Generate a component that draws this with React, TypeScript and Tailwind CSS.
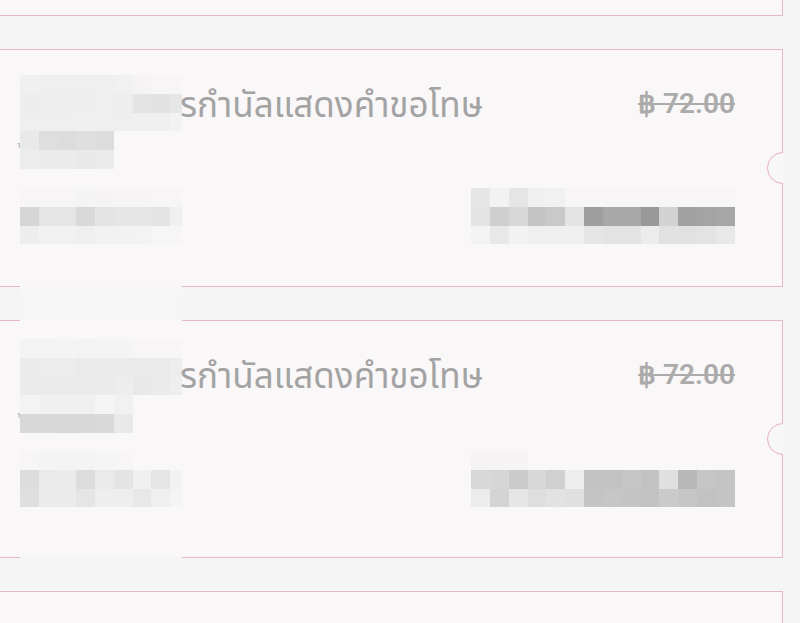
type Row = { cells: string[] };
type Mosaic = { top: number; rows: Row[] };

type Ticket = {
  bare?: boolean;
  leftTop?: Mosaic;
  leftBottom?: Mosaic;
  right?: Mosaic;
  qtyTop?: number;
  strip?: "tall" | "short";
};

const F = "#f7f5f6";

const tickets: Ticket[] = [
  { bare: true },
  {
    leftTop: {
      top: 25,
      rows: [
        { cells: ["#f0f0f0", "#efefef", "#efefef", "#efefef", "#efefef", "#f1f1f1", "#f5f3f4", F, F] },
        { cells: ["#ededed", "#eeeeee", "#eeeeee", "#eeeeee", "#efefef", "#eeeeee", "#e4e4e4", "#e2e2e2", "#e6e6e6"] },
        { cells: ["#efefef", "#efefef", "#efefef", "#f0f0f0", "#efefef", "#efefef", "#f0f0f0", "#efefef", "#f2f2f2"] },
        { cells: ["#e9e9e9", "#dedede", "#dcdcdc", "#dfdfdf", "#dddddd"] },
        { cells: ["#ececec", "#ebebeb", "#ebebeb", "#e9e9e9", "#ebebeb"] },
      ],
    },
    qtyTop: 93,
    leftBottom: {
      top: 138,
      rows: [
        { cells: [F, F, F, "#f5f4f4", "#f5f3f4", "#f6f4f5", "#f6f4f5", F, F] },
        { cells: ["#d6d6d6", "#e5e5e5", "#e5e5e5", "#d9d9d9", "#e4e4e4", "#e6e6e6", "#e6e6e6", "#e4e4e4", "#f0f0f0"] },
        { cells: ["#ededed", "#f1f1f1", "#f1f1f1", "#efefef", "#f2f2f2", "#f2f2f2", "#f3f3f3", "#f6f6f6", F] },
      ],
    },
    right: {
      top: 138,
      rows: [
        { cells: ["#e6e6e6", "#f3f2f2", "#e5e5e5", "#f1f0f0", "#f2f1f1", "#f7f5f5", F, F, F, F, F, F, F, F] },
        { cells: ["#e3e3e3", "#cfcfcf", "#d8d8d8", "#c4c4c4", "#c9c9c9", "#e3e3e3", "#9e9e9e", "#a8a8a8", "#a8a8a8", "#999999", "#d3d3d3", "#a2a2a2", "#a4a4a4", "#a6a6a6"] },
        { cells: ["#f3f3f3", "#e8e8e8", "#f2f2f2", "#efefef", "#efefef", "#f0f0f0", "#e6e6e6", "#e3e3e3", "#e3e3e3", "#ececec", "#e1e1e1", "#e1e1e1", "#e3e3e3", "#e8e8e8"] },
      ],
    },
    strip: "tall",
  },
  {
    leftTop: {
      top: 18,
      rows: [
        { cells: ["#f3f3f3", "#f3f3f3", "#f4f4f4", "#f3f3f3", "#f4f4f4", "#f4f4f4", F, F, F] },
        { cells: ["#ebebeb", "#ececec", "#ececec", "#eaeaea", "#ebebeb", "#ebebeb", "#eaeaea", "#eaeaea", "#ededed"] },
        { cells: ["#ebebeb", "#ebebeb", "#ebebeb", "#ebebeb", "#ebebeb", "#ededed", "#e9e9e9", "#ebebeb", "#eeeeee"] },
        { cells: ["#f3f3f3", "#f0f0f0", "#f0f0f0", "#f0f0f0", "#f5f5f5", "#f1f1f1"] },
        { cells: ["#d8d8d8", "#d8d8d8", "#d7d7d7", "#d8d8d8", "#d9d9d9", "#e9e9e9"] },
      ],
    },
    qtyTop: 92,
    leftBottom: {
      top: 130,
      rows: [
        { cells: [F, "#f5f4f4", "#f5f4f4", "#f5f4f4", "#f6f5f5", F] },
        { cells: ["#dcdcdc", "#eaeaea", "#ebebeb", "#dddddd", "#eaeaea", "#e4e4e4", "#f0f0f0", "#e5e5e5", "#f2f2f2"] },
        { cells: ["#dfdfdf", "#ebebeb", "#ebebeb", "#e5e5e5", "#eeeeee", "#eeeeee", "#e8e8e8", "#efefef", "#f4f4f4"] },
      ],
    },
    right: {
      top: 130,
      rows: [
        { cells: ["#f5f3f3", "#f5f3f3", "#f5f3f3"] },
        { cells: ["#d8d8d8", "#d6d6d6", "#cbcbcb", "#d8d8d8", "#d0d0d0", "#eeeeee", "#c2c2c2", "#c2c2c2", "#c6c6c6", "#c2c2c2", "#e0e0e0", "#b8b8b8", "#c6c6c6", "#c4c4c4"] },
        { cells: ["#ececec", "#d4d4d4", "#e6e6e6", "#dedede", "#e2e2e2", "#e0e0e0", "#c4c4c4", "#c6c6c6", "#c4c4c4", "#c2c2c2", "#cacaca", "#c6c6c6", "#c2c2c2", "#c4c4c4"] },
      ],
    },
    strip: "short",
  },
  { bare: true },
];

function MosaicBlock({ m, cell }: { m: Mosaic; cell: number }) {
  return (
    <div className="flex flex-col">
      {m.rows.map((r, i) => (
        <div key={i} className="flex h-[18.75px]">
          {r.cells.map((c, j) => (
            <div key={j} className="h-full shrink-0" style={{ width: cell, background: c }} />
          ))}
        </div>
      ))}
    </div>
  );
}

function TicketCard({ t }: { t: Ticket }) {
  return (
    <div className="relative h-[238px] w-[784px] shrink-0 -ml-px border border-[#e6b6cc] bg-[#faf7f8]">
      {!t.bare && (
        <div className="flex h-full">
          {/* left column: redacted name, qty, date */}
          <div className="relative w-[182px] shrink-0 overflow-hidden pl-[20px]">
            {t.leftTop && (
              <div className="absolute left-[20px] w-[162px] overflow-hidden" style={{ top: t.leftTop.top }}>
                <MosaicBlock m={t.leftTop} cell={18.75} />
              </div>
            )}
            {t.qtyTop !== undefined && (
              <span
                className="absolute left-[17px] font-['Roboto',sans-serif] text-[7px] leading-none text-[#888]"
                style={{ top: t.qtyTop }}
              >
                1
              </span>
            )}
            {t.leftBottom && (
              <div className="absolute left-[20px] w-[162px] overflow-hidden" style={{ top: t.leftBottom.top }}>
                <MosaicBlock m={t.leftBottom} cell={18.75} />
              </div>
            )}
          </div>

          <div className="relative flex flex-1 flex-col pr-[47px]">
            <div className="flex items-start justify-between pt-[33px]">
              <span className="-ml-[2px] font-['Noto_Sans_Thai','Noto_Sans',sans-serif] text-[35px] leading-[48px] text-[#a3a3a3]">
                รกำนัลแสดงคำขอโทษ
              </span>
              <span className="mt-[1px] font-['Roboto',sans-serif] text-[28px] font-semibold leading-[40px] text-[#ababab] line-through">
                ฿ 72.00
              </span>
            </div>
            {t.right && (
              <div className="absolute right-[47px] w-[264px]" style={{ top: t.right.top }}>
                <MosaicBlock m={t.right} cell={264 / 14} />
              </div>
            )}
          </div>
        </div>
      )}

      {/* ticket notch */}
      <div className="absolute right-[-1px] top-[102px] h-[32px] w-[16px] overflow-hidden">
        <div className="h-[32px] w-[32px] rounded-full border border-[#e6b0c9] bg-[#f7f7f7]" />
      </div>

      {t.strip === "tall" && (
        <div className="absolute left-[20px] top-[233px] z-10 flex w-[162px] flex-col">
          <div className="h-[8px] bg-[#f8f6f7]" />
          <div className="h-[28px] bg-[#f6f6f6]" />
          <div className="h-[14px] bg-[#f9f7f8]" />
        </div>
      )}
      {t.strip === "short" && (
        <div className="absolute left-[20px] top-[224px] z-10 flex w-[162px] flex-col">
          <div className="h-[11px] bg-[#f9f7f8]" />
          <div className="h-[5px] bg-[#f6f6f6]" />
        </div>
      )}
    </div>
  );
}

export default function App() {
  return (
    <div className="h-screen w-full overflow-hidden bg-[#f5f5f5]">
      <div className="-mt-[222px] flex flex-col gap-[33px]">
        {tickets.map((t, i) => (
          <TicketCard key={i} t={t} />
        ))}
      </div>
    </div>
  );
}
